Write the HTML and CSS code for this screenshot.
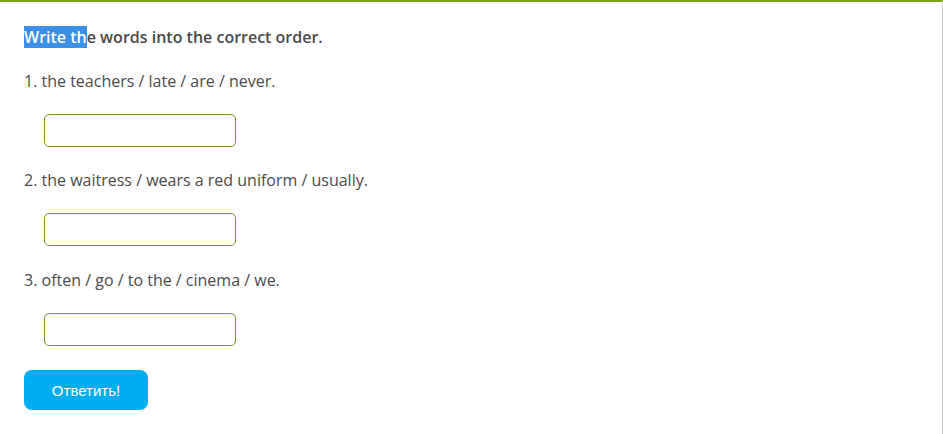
FILE: index.html
```html
<!DOCTYPE html>
<html>
<head>
<meta charset="utf-8">
<link rel="stylesheet" href="styles.css">
</head>
<body>
<div class="panel">
  <h1 class="title"><span class="sel">Write th</span>e words into the correct order.</h1>
  <p class="q">1. the teachers / late / are / never.</p>
  <div class="field"><input class="answer" type="text"></div>
  <p class="q">2. the waitress / wears a red uniform / usually.</p>
  <div class="field"><input class="answer" type="text"></div>
  <p class="q q3">3. often / go / to the / cinema / we.</p>
  <div class="field"><input class="answer" type="text"></div>
  <div class="actions"><button class="submit" type="button">Ответить!</button></div>
</div>
</body>
</html>
```
FILE: styles.css
```css
html, body {
  margin: 0;
  padding: 0;
  background: #fff;
}
body {
  font-family: "Open Sans", "Liberation Sans", sans-serif;
  color: #4a4a4a;
}
.panel {
  box-sizing: border-box;
  width: 943px;
  height: 434px;
  border-top: 2px solid #7aa51c;
  border-right: 1px solid #c8c8c8;
  padding: 24px 24px 0 24px;
  display: flex;
  flex-direction: column;
  gap: 22px;
}
.title {
  margin: 0;
  font-size: 16px;
  font-weight: 600;
  line-height: 22px;
  color: #4a4a4a;
}
.sel {
  background: #3b8fe6;
  color: #fff;
}
.q {
  margin: 0;
  font-size: 16px;
  line-height: 22px;
}
.q3 {
  margin-top: 1px;
}
.field {
  padding-left: 20px;
  display: flex;
}
.answer {
  box-sizing: border-box;
  width: 192px;
  height: 33px;
  border: 1px solid #7a9b2c;
  border-radius: 5px;
  box-shadow: inset 0 1px 2px rgba(0,0,0,0.08);
  background: #fff;
  outline: none;
  margin: 0;
}
.actions {
  margin-top: 2px;
  display: flex;
}
.submit {
  width: 124px;
  height: 40px;
  border: none;
  border-radius: 8px;
  background: #00aeef;
  color: #fff;
  font-family: "Liberation Sans", Arial, sans-serif;
  font-size: 15px;
  padding: 0;
}
```
